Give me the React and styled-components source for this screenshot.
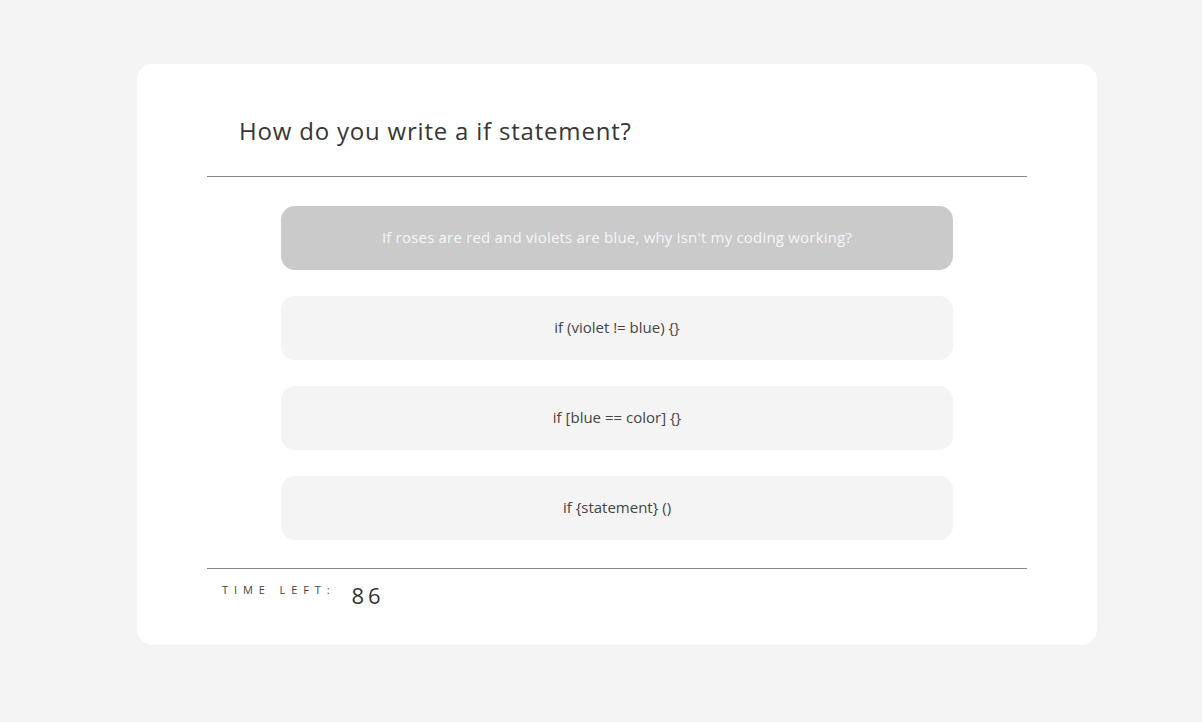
import React from 'react';
import styled, { createGlobalStyle } from 'styled-components';

const GlobalStyle = createGlobalStyle`
  html, body {
    margin: 0;
    padding: 0;
    background: #f4f4f4;
    font-family: 'Open Sans', 'Liberation Sans', sans-serif;
  }
`;

const question = 'How do you write a if statement?';
const answers = [
  "If roses are red and violets are blue, why isn't my coding working?",
  'if (violet != blue) {}',
  'if [blue == color] {}',
  'if {statement} ()',
];

const App = () => (
  <>
    <GlobalStyle />
    <Page>
      <Card>
        <Header>
          <Title>{question}</Title>
        </Header>
        <Options>
          {answers.map((a, i) => (
            <Option key={a} selected={i === 0}>
              {a}
            </Option>
          ))}
        </Options>
        <Footer>
          <TimeLabel>Time left:</TimeLabel>
          <TimeValue>86</TimeValue>
        </Footer>
      </Card>
    </Page>
  </>
);

const Page = styled.div`
  min-height: 722px;
  display: flex;
  justify-content: center;
  padding: 64px 0 0 32px;
  box-sizing: border-box;
`;

const Card = styled.div`
  width: 960px;
  height: 581px;
  box-sizing: border-box;
  background: #fff;
  border-radius: 16px;
  padding: 0 70px;
  display: flex;
  flex-direction: column;
`;

const Header = styled.div`
  padding: 52px 32px 30px;
  border-bottom: 1px solid #8a8a8a;
`;

const Title = styled.h1`
  margin: 0;
  font-size: 24px;
  line-height: 30px;
  font-weight: 400;
  letter-spacing: 0.8px;
  color: #363636;
`;

const Options = styled.div`
  display: flex;
  flex-direction: column;
  gap: 26px;
  padding: 29px 74px 28px;
  border-bottom: 1px solid #8a8a8a;
`;

const Option = styled.button`
  height: 64px;
  border: none;
  border-radius: 14px;
  background: ${p => (p.selected ? '#cacaca' : '#f4f4f4')};
  color: ${p => (p.selected ? '#f6f6f6' : '#444')};
  font-family: inherit;
  font-size: 15px;
  line-height: 20px;
  padding: 0 0 2px;
  letter-spacing: ${p => (p.selected ? '0.2px' : '0')};
  cursor: pointer;
`;

const Footer = styled.div`
  display: flex;
  align-items: flex-start;
  gap: 16px;
  padding: 13px 15px;
`;

const TimeLabel = styled.span`
  font-size: 11px;
  line-height: 16px;
  text-transform: uppercase;
  letter-spacing: 5.9px;
  color: #444;
`;

const TimeValue = styled.span`
  font-size: 22px;
  line-height: 24px;
  margin-top: 1px;
  letter-spacing: 4px;
  color: #333;
`;

export default App;
